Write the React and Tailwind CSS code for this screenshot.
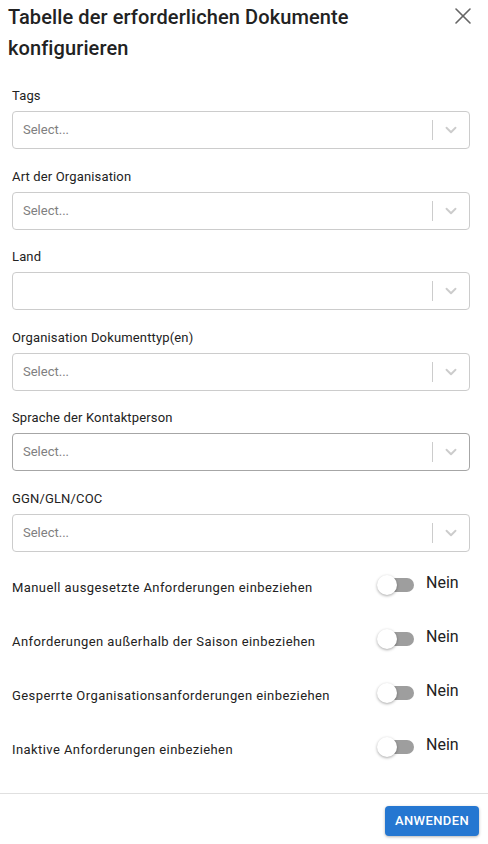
import { X, ChevronDown } from 'lucide-react'

const FIELDS = [
  { label: 'Tags', placeholder: 'Select...' },
  { label: 'Art der Organisation', placeholder: 'Select...' },
  { label: 'Land', placeholder: '' },
  { label: 'Organisation Dokumenttyp(en)', placeholder: 'Select...' },
  { label: 'Sprache der Kontaktperson', placeholder: 'Select...', hover: true },
  { label: 'GGN/GLN/COC', placeholder: 'Select...' },
]

const TOGGLES = [
  'Manuell ausgesetzte Anforderungen einbeziehen',
  'Anforderungen außerhalb der Saison einbeziehen',
  'Gesperrte Organisationsanforderungen einbeziehen',
  'Inaktive Anforderungen einbeziehen',
]

function SelectField({ label, placeholder, hover }) {
  return (
    <div className="flex flex-col">
      <label className="mb-[5px] text-[13px] leading-[20px] tracking-[0.15px] text-[#222]">{label}</label>
      <div
        className={
          'flex h-[38px] items-center rounded-[4px] border bg-white ' +
          (hover ? 'border-[#a6a6a6]' : 'border-[#cccccc]')
        }
      >
        <span className="flex-1 pl-[10px] text-[13px] text-[#808080]">{placeholder}</span>
        <span className="h-[20px] w-px bg-[#cccccc]" />
        <span className="flex w-[36px] items-center justify-center text-[#cccccc]">
          <ChevronDown className="h-[18px] w-[18px]" strokeWidth={2.5} />
        </span>
      </div>
    </div>
  )
}

function ToggleRow({ label }) {
  return (
    <div className="flex h-[54px] items-center">
      <span className="flex-1 pt-[6px] text-[13px] tracking-[0.42px] text-[#222]">{label}</span>
      <div className="flex w-[100px] items-center">
        <span className="relative ml-[4px] h-[14px] w-[34px] rounded-full bg-[#9e9e9e]">
          <span className="absolute -left-[3px] -top-[3px] h-[20px] w-[20px] rounded-full bg-white shadow-[0_1px_3px_rgba(0,0,0,0.35)]" />
        </span>
        <span className="ml-[12px] -mt-[4px] text-[16px] text-[#222]">Nein</span>
      </div>
    </div>
  )
}

export default function App() {
  return (
    <div
      className="flex min-h-[844px] w-[488px] flex-col bg-white"
      style={{ fontFamily: 'Roboto, "Noto Sans", sans-serif' }}
    >
      <div className="flex items-start justify-between pl-[8px] pr-[11px] pt-[2px]">
        <h2 className="text-[20px] font-medium leading-[31px] tracking-[0.1px] text-[#222]">
          Tabelle der erforderlichen Dokumente
          <br />
          konfigurieren
        </h2>
        <button className="text-[#666]" aria-label="Close">
          <X className="h-[28px] w-[28px]" strokeWidth={1.4} />
        </button>
      </div>

      <div className="flex flex-col gap-[17.5px] pl-[12px] pr-[18px] pt-[22px]">
        {FIELDS.map((f) => (
          <SelectField key={f.label} {...f} />
        ))}
      </div>

      <div className="flex flex-col pl-[12px] pr-[12px] pt-[6px]">
        {TOGGLES.map((t) => (
          <ToggleRow key={t} label={t} />
        ))}
      </div>

      <div className="mt-[19px] border-t border-[#e0e0e0]" />
      <div className="flex justify-end px-[9px] pt-[12px]">
        <button className="h-[30px] rounded-[4px] bg-[#2577d1] px-[10px] text-[13px] font-medium tracking-[0.03em] text-white shadow-[0_1px_3px_rgba(0,0,0,0.3)]">
          ANWENDEN
        </button>
      </div>
    </div>
  )
}
